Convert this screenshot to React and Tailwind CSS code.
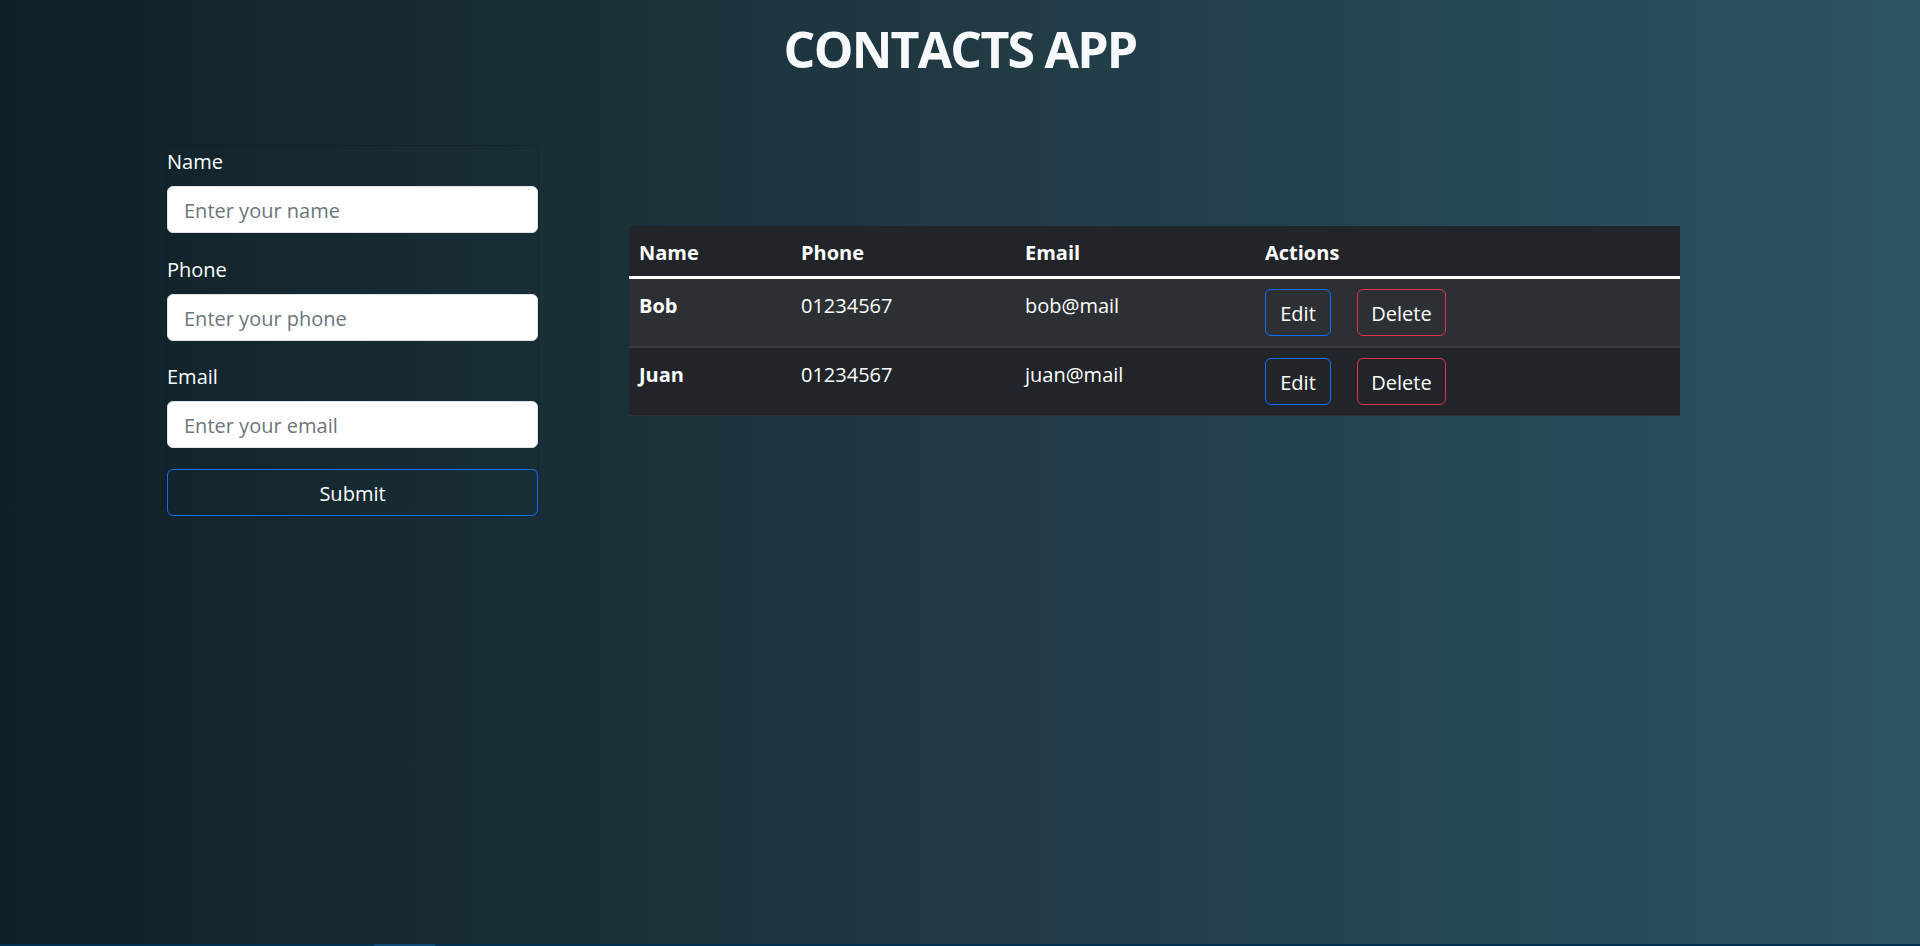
import React, { useState } from "react";

const initialContacts = [
  { name: "Bob", phone: "01234567", email: "bob@mail" },
  { name: "Juan", phone: "01234567", email: "juan@mail" },
];

export default function App() {
  const [contacts] = useState(initialContacts);

  return (
    <div className="h-[946px] flex flex-col bg-linear-to-r from-[#0f2027] via-[#203a43] to-[#2c5364] text-white font-['Open_Sans','Noto_Sans',sans-serif] overflow-hidden">
      <div className="flex-1">
        <h1 className="text-center text-[50px] leading-[60px] font-bold tracking-[-1.8px] pt-[19px] text-[#f8f9fa]">
          CONTACTS APP
        </h1>

        <div className="flex items-start pl-[166px] mt-[66px]">
          {/* Form */}
          <form className="w-[373px] border border-black/15 rounded-md">
            <label className="block text-[20px] leading-[30px] pt-[1px] mb-[9px]">Name</label>
            <input
              placeholder="Enter your name"
              className="block w-full h-[47px] rounded-md bg-white px-[16px] pt-[2px] text-[20px] text-[#212529] placeholder:text-[#6c757d] border border-[#dee2e6] outline-none mb-[21px]"
            />
            <label className="block text-[20px] leading-[30px] pt-[1px] mb-[9px]">Phone</label>
            <input
              placeholder="Enter your phone"
              className="block w-full h-[47px] rounded-md bg-white px-[16px] pt-[2px] text-[20px] text-[#212529] placeholder:text-[#6c757d] border border-[#dee2e6] outline-none mb-[20px]"
            />
            <label className="block text-[20px] leading-[30px] pt-[1px] mb-[9px]">Email</label>
            <input
              placeholder="Enter your email"
              className="block w-full h-[47px] rounded-md bg-white px-[16px] pt-[2px] text-[20px] text-[#212529] placeholder:text-[#6c757d] border border-[#dee2e6] outline-none mb-[21px]"
            />
            <button
              type="button"
              className="w-full h-[47px] rounded-md border border-[#0d6efd] pt-[2px] text-[20px] text-white"
            >
              Submit
            </button>
          </form>

          {/* Table */}
          <table className="table-fixed w-[1051px] ml-[90px] mt-[81px] border-collapse text-[20px] leading-[30px]">
            <colgroup>
              <col className="w-[162px]" />
              <col className="w-[224px]" />
              <col className="w-[240px]" />
              <col />
            </colgroup>
            <thead>
              <tr className="bg-[#212529] border-b-[3px] border-white">
                <th className="px-[10px] pt-[12px] pb-[8px] text-left font-bold">Name</th>
                <th className="px-[10px] pt-[12px] pb-[8px] text-left font-bold">Phone</th>
                <th className="px-[10px] pt-[12px] pb-[8px] text-left font-bold">Email</th>
                <th className="px-[10px] pt-[12px] pb-[8px] text-left font-bold">Actions</th>
              </tr>
            </thead>
            <tbody>
              {contacts.map((c, i) => (
                <tr
                  key={c.name}
                  className={
                    i % 2 === 0
                      ? "bg-[#2c3034] border-b-2 border-[#373b3e]"
                      : "bg-[#212529] border-b border-[#2e3236]"
                  }
                >
                  <td className="px-[10px] pt-[12px] align-top font-bold">{c.name}</td>
                  <td className="px-[10px] pt-[12px] align-top">{c.phone}</td>
                  <td className="px-[10px] pt-[12px] align-top">{c.email}</td>
                  <td className="px-[10px] py-[10px] align-top">
                    <div className="flex gap-[26px]">
                      <button className="h-[47px] w-[66px] rounded-[6px] border border-[#0d6efd] pt-[2px] text-[20px]">
                        Edit
                      </button>
                      <button className="h-[47px] w-[89px] rounded-[6px] border border-[#dc3545] pt-[2px] text-[20px]">
                        Delete
                      </button>
                    </div>
                  </td>
                </tr>
              ))}
            </tbody>
          </table>
        </div>
      </div>

      {/* bottom strip */}
      <div className="h-[2px] bg-[#023050] flex">
        <div className="w-[374px]" />
        <div className="w-[61px] bg-[#0b4a75]" />
      </div>
    </div>
  );
}
